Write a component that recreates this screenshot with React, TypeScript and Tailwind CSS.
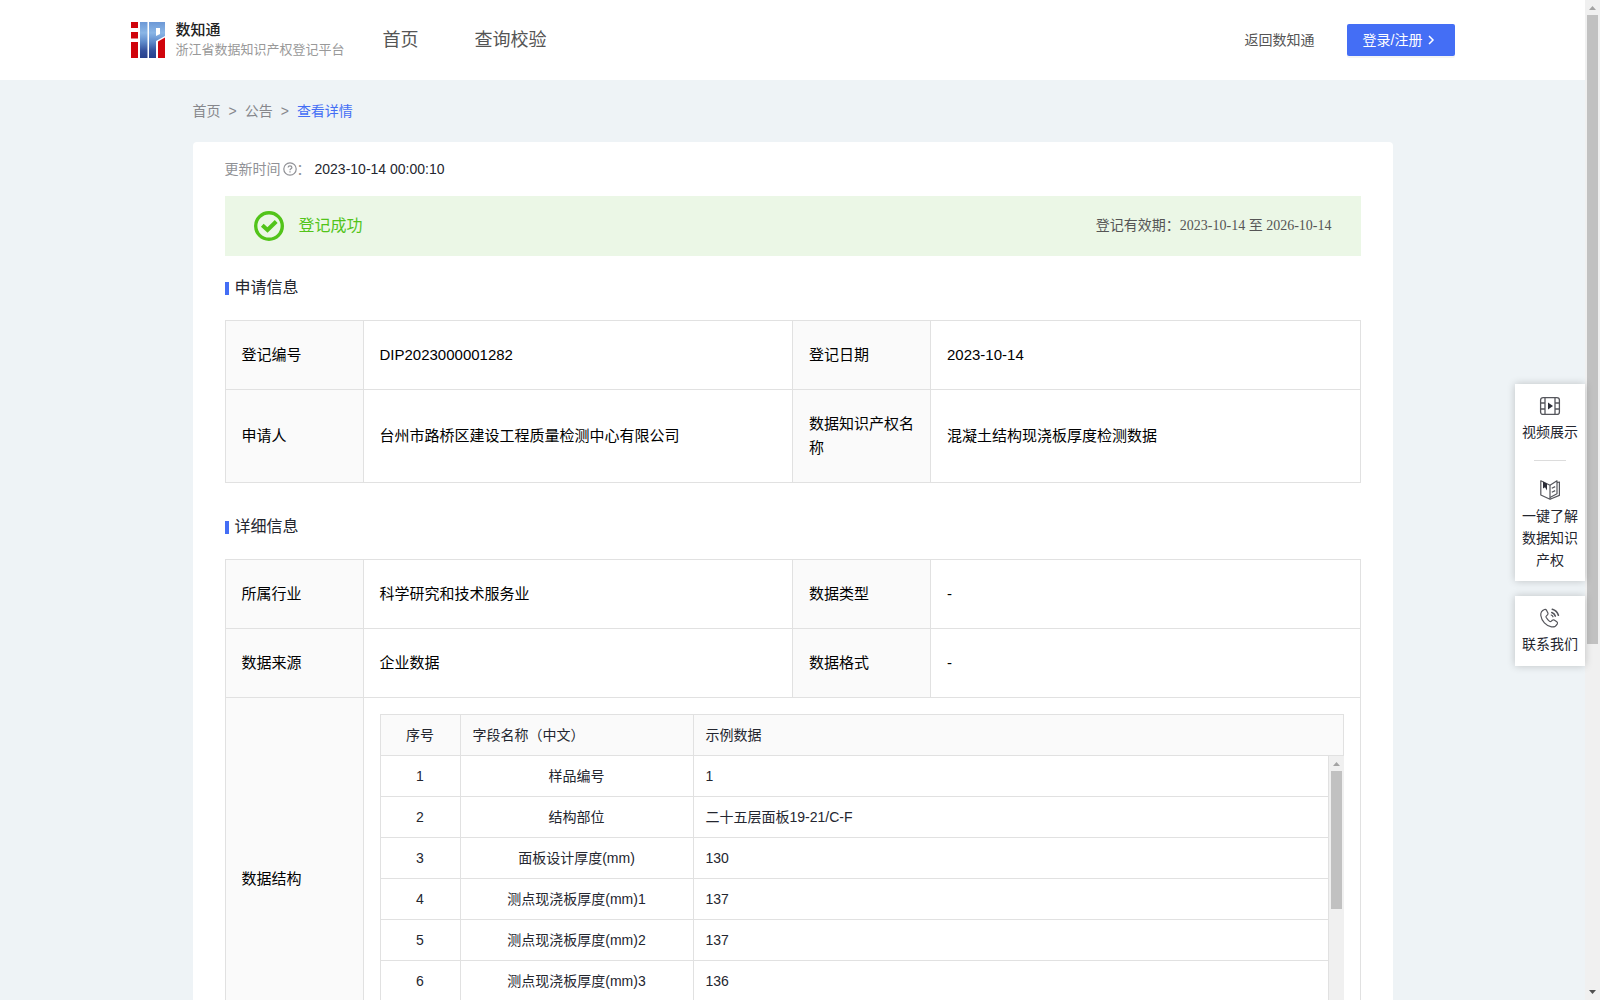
import React from "react";

type Field = { label: string; value: string };

const applyRows: [Field, Field][] = [
  [
    { label: "登记编号", value: "DIP2023000001282" },
    { label: "登记日期", value: "2023-10-14" },
  ],
  [
    { label: "申请人", value: "台州市路桥区建设工程质量检测中心有限公司" },
    { label: "数据知识产权名称", value: "混凝土结构现浇板厚度检测数据" },
  ],
];

const detailRows: [Field, Field][] = [
  [
    { label: "所属行业", value: "科学研究和技术服务业" },
    { label: "数据类型", value: "-" },
  ],
  [
    { label: "数据来源", value: "企业数据" },
    { label: "数据格式", value: "-" },
  ],
];

const structure = [
  ["1", "样品编号", "1"],
  ["2", "结构部位", "二十五层面板19-21/C-F"],
  ["3", "面板设计厚度(mm)", "130"],
  ["4", "测点现浇板厚度(mm)1", "137"],
  ["5", "测点现浇板厚度(mm)2", "137"],
  ["6", "测点现浇板厚度(mm)3", "136"],
];

function Logo() {
  return (
    <svg width="34" height="36" viewBox="0 0 34 36" aria-hidden="true">
      <defs>
        <linearGradient id="blue" x1="0" y1="0" x2="0" y2="36" gradientUnits="userSpaceOnUse">
          <stop offset="0" stopColor="#6c98d6" />
          <stop offset="0.3" stopColor="#8ab6e6" />
          <stop offset="0.55" stopColor="#5f8bcb" />
          <stop offset="0.8" stopColor="#34509c" />
          <stop offset="1" stopColor="#27408c" />
        </linearGradient>
      </defs>
      <path d="M0 0h7v6H0zM0 10h7v6.500H0zM0 20h7v16H0z" fill="#d0040c" />
      <path d="M9 0h7.500v36H9z" fill="url(#blue)" />
      <path d="M18 0h16v14l-9 5v17h-7zM25 6v8l4-2V6z" fill="url(#blue)" fillRule="evenodd" />
      <path d="M27 19.500l7-4V36h-7z" fill="#d0040c" />
    </svg>
  );
}

function Triangle({ down = false }: { down?: boolean }) {
  return (
    <svg width="7" height="4" viewBox="0 0 7 4" className="shrink-0" aria-hidden="true">
      <path d={down ? "M0 0h7L3.500 4z" : "M0 4h7L3.500 0z"} fill={down ? "#505050" : "#a3a3a3"} />
    </svg>
  );
}

function VideoIcon() {
  return (
    <svg width="22" height="22" viewBox="0 0 22 22" fill="none" stroke="#55565c" strokeWidth="1.300" aria-hidden="true">
      <rect x="1.600" y="2.600" width="18.800" height="16.800" rx="2.500" />
      <path d="M6 2.600v16.800M16 2.600v16.800M1.600 8H6M1.600 14H6M16 8h4.400M16 14h4.400" />
      <path d="M9 7.500v7l5-3.500z" fill="#2c2e38" stroke="none" />
    </svg>
  );
}

function BookIcon() {
  return (
    <svg width="22" height="22" viewBox="0 0 22 22" fill="none" stroke="#55565c" strokeWidth="1.200" strokeLinejoin="round" aria-hidden="true">
      <path d="M1.800 1.800v14.200l9.200 4.200V6.200z" />
      <path d="M11 6.200l7-4.400v13L11 18.500" />
      <path d="M18 3.600l2.400-.6v13.400L11 20.200" />
      <path d="M4 2.500v7l2-1.300 2 3.300V4.700z" fill="#2c2e38" stroke="none" />
      <path d="M12.800 9.200l3.400-1.600M12.800 13.200l3.400-1.600" />
    </svg>
  );
}

function PhoneIcon() {
  return (
    <svg width="22" height="22" viewBox="0 0 22 22" fill="none" stroke="#55565c" strokeWidth="1.200" strokeLinecap="round" strokeLinejoin="round" aria-hidden="true">
      <path d="M5.500 2.500C3 3.500 1.500 5.500 1.800 8.500c.8 5.500 5.200 10.400 10.700 11.400 2.800.4 4.800-1 5.900-3.200.3-.8 0-1.400-.6-1.900l-2.600-1.700c-.7-.4-1.400-.3-1.900.2l-1.200 1.100c-.5.4-1 .4-1.500 0-1.400-1.100-2.600-2.500-3.500-4.100-.3-.6-.2-1 .3-1.400l1.100-1c.6-.5.7-1.100.4-1.800L7.500 3.200c-.4-.8-1.100-1-2-.7z" />
      <path d="M12.800 5.600c1.700.6 2.900 1.700 3.500 3.500M13.300 2.200c3 .8 5.200 3 6.100 6" strokeWidth="1.600" />
      <path d="M12.200 8c.8.300 1.500.9 1.800 1.800" />
    </svg>
  );
}

function SectionTitle({ children }: { children: React.ReactNode }) {
  return (
    <h2 className="flex h-6 items-center text-base leading-6 text-[#24262f]">
      <span className="mr-[6px] mt-px h-[13px] w-1 bg-[#446ef5]" />
      {children}
    </h2>
  );
}

const labelCell =
  "border border-[#e1e1e1] bg-[#fafafa] px-4 py-[22px] text-left text-[15px] font-normal leading-6 text-black";
const valueCell = "border border-[#e1e1e1] px-4 py-[22px] text-[15px] leading-6 text-black";
const innerCell = "border-b border-r border-[#e1e1e1] px-3 py-[9px] leading-[22px]";

function FieldTable({ rows, children }: { rows: [Field, Field][]; children?: React.ReactNode }) {
  return (
    <table className="w-full table-fixed border-collapse">
      <colgroup>
        <col className="w-[138px]" />
        <col />
        <col className="w-[138px]" />
        <col />
      </colgroup>
      <tbody>
        {rows.map((row) => (
          <tr key={row[0].label}>
            {row.map((f) => (
              <React.Fragment key={f.label}>
                <th scope="row" className={labelCell}>{f.label}</th>
                <td className={valueCell}>{f.value}</td>
              </React.Fragment>
            ))}
          </tr>
        ))}
        {children}
      </tbody>
    </table>
  );
}

function InnerCols() {
  return (
    <colgroup>
      <col className="w-[80px]" />
      <col className="w-[233px]" />
      <col />
    </colgroup>
  );
}

function StructureTable() {
  return (
    <div className="border-l border-t border-[#e1e1e1] text-sm text-[#24262f]">
      <table className="w-full table-fixed border-separate border-spacing-0 bg-[#fafafa]">
        <InnerCols />
        <thead>
          <tr>
            <th className={innerCell + " text-center font-normal"}>序号</th>
            <th className={innerCell + " text-left font-normal"}>字段名称（中文）</th>
            <th className={innerCell + " text-left font-normal"}>示例数据</th>
          </tr>
        </thead>
      </table>
      <div className="flex h-[287px]">
        <div className="min-w-0 flex-1 overflow-y-auto border-r border-[#e1e1e1] [scrollbar-width:none]">
          <table className="w-full table-fixed border-separate border-spacing-0">
            <InnerCols />
            <tbody>
              {structure.map(([no, name, sample]) => (
                <tr key={no}>
                  <td className={innerCell + " text-center"}>{no}</td>
                  <td className={innerCell + " text-center"}>{name}</td>
                  <td className="border-b border-[#e1e1e1] px-3 py-[9px] leading-[22px]">{sample}</td>
                </tr>
              ))}
            </tbody>
          </table>
        </div>
        <div className="flex w-[15px] flex-col items-center bg-[#f0f0f0] pt-[6px]">
          <Triangle />
          <div className="mt-[5px] h-[138px] w-[11px] bg-[#c1c1c1]" />
        </div>
      </div>
    </div>
  );
}

export default function App() {
  return (
    <div className="flex h-screen bg-[#eef3f6] font-['Liberation_Sans','Noto_Sans_CJK_SC',sans-serif]">
      <div className="relative min-w-0 flex-1">
        <div className="h-full overflow-y-auto [scrollbar-width:none]">
          <header className="bg-white">
            <div className="mx-auto flex h-20 max-w-[1324px] items-center">
              <a href="#" className="flex items-center">
                <Logo />
                <span className="ml-[11px] flex flex-col">
                  <span className="text-[15px] font-medium leading-5 text-[#222]">数知通</span>
                  <span className="text-[13px] leading-5 text-[#999]">浙江省数据知识产权登记平台</span>
                </span>
              </a>
              <nav className="ml-[38px] flex gap-14 text-lg leading-6 text-[#555]">
                <a href="#">首页</a>
                <a href="#">查询校验</a>
              </nav>
              <div className="ml-auto flex items-center gap-8 text-sm">
                <a href="#" className="text-[#555]">返回数知通</a>
                <button type="button" className="flex h-8 w-[108px] items-center rounded-xs bg-[#446ef5] pl-4 text-white shadow-[0_2px_0_rgba(0,0,0,0.045)]">
                  登录/注册
                  <svg width="8" height="10" viewBox="0 0 8 10" className="ml-[5px]" fill="none" stroke="#fff" strokeWidth="1.500" aria-hidden="true">
                    <path d="M2 1l4 4-4 4" />
                  </svg>
                </button>
              </div>
            </div>
          </header>

          <main className="mx-auto max-w-[1200px] pb-16">
            <nav className="flex gap-2 pb-5 pt-5 text-sm leading-[22px] text-[#86878c]">
              <a href="#">首页</a>
              <span>&gt;</span>
              <a href="#">公告</a>
              <span>&gt;</span>
              <a href="#" className="text-[#446ef5]">查看详情</a>
            </nav>

            <div className="rounded bg-white px-8 pb-12 pt-4">
              <div className="flex items-center text-sm leading-[22px] text-[#909196]">
                <span>更新时间</span>
                <svg width="14" height="14" viewBox="0 0 14 14" className="ml-[2px]" fill="none" stroke="#909196" strokeWidth="1.200" aria-hidden="true">
                  <circle cx="7" cy="7" r="6.200" />
                  <path d="M5.100 5.600c0-2.400 3.800-2.400 3.800 0 0 1.200-1.900 1.300-1.900 2.600M7 9.300v1.200" />
                </svg>
                <span>：</span>
                <span className="ml-1 text-[#24262f]">2023-10-14 00:00:10</span>
              </div>

              <div className="mt-4 flex h-[60px] items-center bg-[#ebf7e6] px-[29px]">
                <svg width="30" height="30" viewBox="0 0 30 30" fill="none" stroke="#52c41a" aria-hidden="true">
                  <circle cx="15" cy="15" r="13.300" strokeWidth="3.400" />
                  <path d="M8.300 14.300l5.200 4.700 8.700-8.500" strokeWidth="4" />
                </svg>
                <span className="ml-[15px] text-base text-[#52c41a]">登记成功</span>
                <span className="ml-auto font-['Liberation_Serif','Noto_Sans_CJK_SC',serif] text-sm text-[#555]">
                  登记有效期：2023-10-14 至 2026-10-14
                </span>
              </div>

              <div className="mb-5 mt-5">
                <SectionTitle>申请信息</SectionTitle>
              </div>
              <FieldTable rows={applyRows} />

              <div className="mb-5 mt-8">
                <SectionTitle>详细信息</SectionTitle>
              </div>
              <FieldTable rows={detailRows}>
                <tr>
                  <th scope="row" className={labelCell}>数据结构</th>
                  <td colSpan={3} className="border border-[#e1e1e1] p-4">
                    <StructureTable />
                  </td>
                </tr>
              </FieldTable>
            </div>
          </main>
        </div>

        <aside className="absolute right-0 top-96 flex w-[70px] flex-col gap-[15px] text-center text-sm leading-[22px] text-[#24262f]">
          <div className="flex flex-col items-center bg-white pb-[10px] pt-[11px] shadow-[0_0_8px_rgba(0,0,0,0.2)]">
            <a href="#" className="flex flex-col items-center gap-1 pb-[17px]">
              <VideoIcon />
              视频展示
            </a>
            <span className="h-px w-8 bg-[#dcdcdc]" />
            <a href="#" className="flex w-14 flex-col items-center gap-1 pt-[18px]">
              <BookIcon />
              一键了解数据知识产权
            </a>
          </div>
          <a href="#" className="flex flex-col items-center gap-1 bg-white py-[11px] shadow-[0_0_8px_rgba(0,0,0,0.2)]">
            <PhoneIcon />
            联系我们
          </a>
        </aside>
      </div>

      <div className="flex w-[15px] shrink-0 flex-col items-center bg-[#f0f0f0] py-[6px]">
        <Triangle />
        <div className="mt-[5px] h-7/11 w-[11px] bg-[#c1c1c1]" />
        <div className="mt-auto flex">
          <Triangle down />
        </div>
      </div>
    </div>
  );
}
